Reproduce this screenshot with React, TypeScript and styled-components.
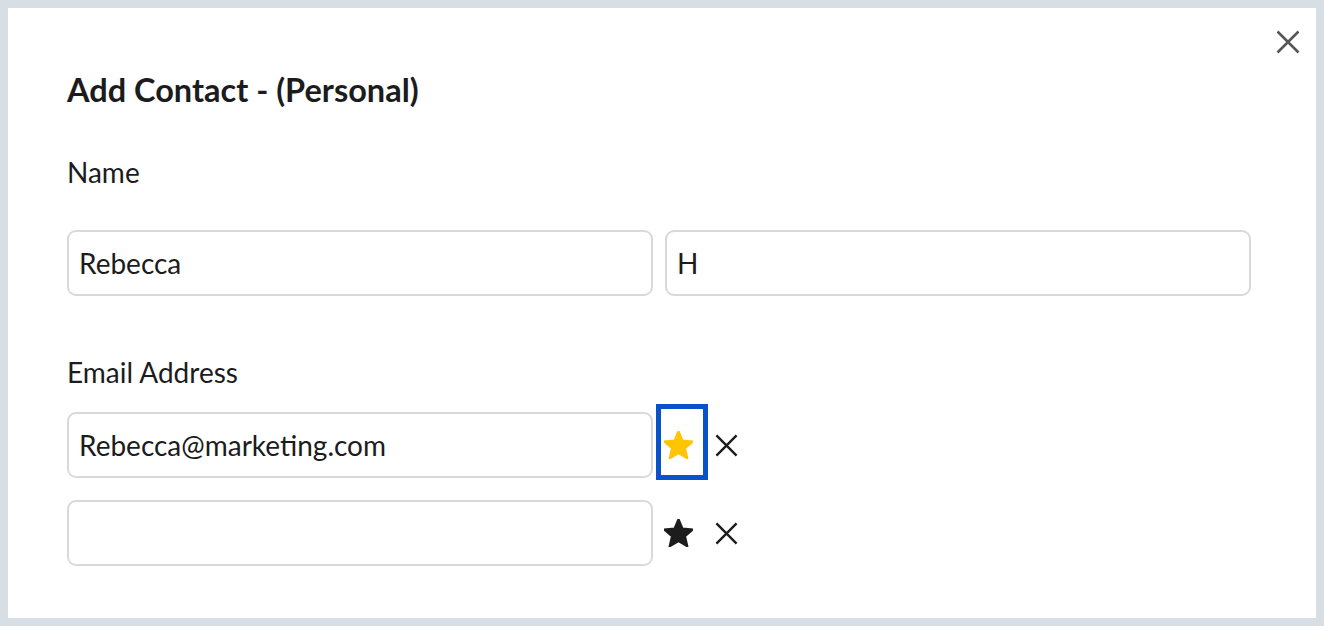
import React, { useState, ChangeEvent } from "react";
import styled, { createGlobalStyle } from "styled-components";

const GlobalStyle = createGlobalStyle`
  body {
    margin: 8px;
    background: #d7dfe5;
    font-family: Lato, "Noto Sans", sans-serif;
    color: #1c1c1c;
  }
`;

const StarIcon: React.FC<{ color: string }> = ({ color }) => (
  <svg width="29" height="28" viewBox="2 2 20 19.4">
    <path
      d="M12 17.27L18.18 21l-1.64-7.03L22 9.24l-7.19-.61L12 2 9.19 8.63 2 9.24l5.46 4.73L5.82 21z"
      fill={color}
      stroke={color}
      strokeWidth="1.4"
      strokeLinejoin="round"
    />
  </svg>
);

const CrossIcon: React.FC<{ color: string; size: number }> = ({ color, size }) => (
  <svg width={size} height={size} viewBox="0 0 24 24">
    <path d="M1.5 1.5L22.5 22.5M22.5 1.5L1.5 22.5" stroke={color} strokeWidth="2.5" fill="none" />
  </svg>
);

type EmailRow = { value: string; primary: boolean };

const AddContact: React.FC = () => {
  const [name, setName] = useState({ first: "Rebecca", last: "H" });
  const [emails, setEmails] = useState<EmailRow[]>([
    { value: "Rebecca@marketing.com", primary: true },
    { value: "", primary: false },
  ]);

  const onNameChange = (e: ChangeEvent<HTMLInputElement>) => {
    setName({ ...name, [e.target.name]: e.target.value });
  };

  const onEmailChange = (i: number, value: string) => {
    setEmails(emails.map((row, j) => (j === i ? { ...row, value } : row)));
  };

  return (
    <Panel>
      <CloseButton type="button" aria-label="Close">
        <CrossIcon color="#555555" size={24} />
      </CloseButton>
      <Title>Add Contact - (Personal)</Title>

      <Label>Name</Label>
      <NameGrid>
        <Field name="first" value={name.first} onChange={onNameChange} />
        <Field name="last" value={name.last} onChange={onNameChange} />
      </NameGrid>

      <Label $spaced>Email Address</Label>
      <EmailList>
        {emails.map((row, i) => (
          <EmailLine key={i}>
            <Field value={row.value} onChange={e => onEmailChange(i, e.target.value)} />
            <StarButton type="button" $focused={row.primary}>
              <StarIcon color={row.primary ? "#ffc505" : "#1c1c1c"} />
            </StarButton>
            <RemoveButton type="button">
              <CrossIcon color="#1c1c1c" size={23} />
            </RemoveButton>
          </EmailLine>
        ))}
      </EmailList>
    </Panel>
  );
};

export default function App() {
  return (
    <>
      <GlobalStyle />
      <AddContact />
    </>
  );
}

const Panel = styled.div`
  position: relative;
  background: #ffffff;
  padding: 62px 64px 52px 59px;
`;

const CloseButton = styled.button`
  position: absolute;
  top: 22px;
  right: 16px;
  display: flex;
  padding: 0;
  border: none;
  background: none;
  cursor: pointer;
`;

const Title = styled.h2`
  margin: 0;
  font-size: 32.5px;
  line-height: 39px;
  font-weight: 700;
`;

const Label = styled.div<{ $spaced?: boolean }>`
  margin-top: ${p => (p.$spaced ? "59px" : "46px")};
  margin-bottom: ${p => (p.$spaced ? "23px" : "41px")};
  font-size: 28px;
  line-height: 34px;
`;

const NameGrid = styled.div`
  display: grid;
  grid-template-columns: 586px 586px;
  gap: 12px;
`;

const Field = styled.input.attrs({ type: "text" })`
  box-sizing: border-box;
  width: 586px;
  height: 66px;
  padding: 0 10px;
  border: 2px solid #d9d9dc;
  border-radius: 9px;
  font-family: Lato, "Noto Sans", sans-serif;
  font-size: 28px;
  color: #1c1c1c;
  outline: none;
`;

const EmailList = styled.div`
  display: flex;
  flex-direction: column;
  gap: 22px;
`;

const EmailLine = styled.div`
  display: flex;
  align-items: center;
  height: 66px;
`;

const StarButton = styled.button<{ $focused: boolean }>`
  box-sizing: border-box;
  display: flex;
  align-items: center;
  width: 52px;
  height: 76px;
  margin: -8px 0 -2px 3px;
  padding: 6px 0 0 3px;
  border: 5px solid ${p => (p.$focused ? "#0a52c9" : "transparent")};
  background: none;
  cursor: pointer;
`;

const RemoveButton = styled.button`
  display: flex;
  margin-left: 7px;
  padding: 0;
  border: none;
  background: none;
  cursor: pointer;
`;
